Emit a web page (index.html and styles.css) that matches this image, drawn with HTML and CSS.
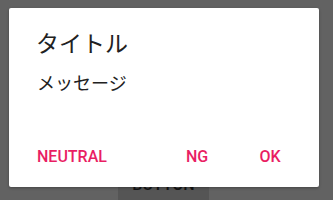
FILE: index.html
```html
<!DOCTYPE html>
<html lang="ja">
<head>
<meta charset="utf-8">
<link rel="stylesheet" href="styles.css">
</head>
<body>
<div class="screen">
  <div class="under">
    <div class="under-button">BUTTON</div>
  </div>
  <div class="dialog">
    <div class="title">タイトル</div>
    <div class="message">メッセージ</div>
    <div class="actions">
      <div class="btn neutral">NEUTRAL</div>
      <div class="btn ng">NG</div>
      <div class="btn ok">OK</div>
    </div>
  </div>
</div>
</body>
</html>
```
FILE: styles.css
```css
html, body {
  margin: 0;
  padding: 0;
}
body {
  background: #626262;
  width: 333px;
  height: 200px;
  overflow: hidden;
}
.screen {
  position: relative;
  width: 333px;
  height: 200px;
  overflow: hidden;
}
.under {
  display: flex;
  padding-top: 161px;
  padding-left: 118px;
}
.under-button {
  width: 91px;
  height: 39px;
  background: #555555;
  color: #141414;
  font-family: Roboto, "Liberation Sans", sans-serif;
  font-weight: 500;
  font-size: 16px;
  display: flex;
  align-items: flex-end;
  justify-content: center;
  line-height: 16px;
  padding-bottom: 7px;
  box-sizing: border-box;
}
.dialog {
  position: absolute;
  left: 9px;
  top: 8px;
  width: 310px;
  height: 179px;
  background: #ffffff;
  border-radius: 2px;
  box-shadow: 0 1px 3px rgba(0,0,0,0.3);
  display: flex;
  flex-direction: column;
  box-sizing: border-box;
}
.title {
  font-family: "Noto Sans CJK JP", "Noto Sans", sans-serif;
  font-size: 23px;
  line-height: 28px;
  color: #212121;
  padding: 20px 28px 0 27px;
}
.message {
  font-family: "Noto Sans CJK JP", "Noto Sans", sans-serif;
  font-size: 18px;
  line-height: 24px;
  color: #212121;
  padding: 14px 28px 0 28px;
}
.actions {
  margin-top: auto;
  display: flex;
  align-items: center;
  padding: 0 14px 10px 19px;
  height: 40px;
}
.btn {
  font-family: Roboto, "Liberation Sans", sans-serif;
  font-weight: 500;
  font-size: 16px;
  color: #e91e63;
  min-width: 70px;
  padding: 0 9px;
  box-sizing: border-box;
  text-align: center;
  line-height: 40px;
}
.ng {
  margin-left: auto;
  margin-right: 3px;
}
```
